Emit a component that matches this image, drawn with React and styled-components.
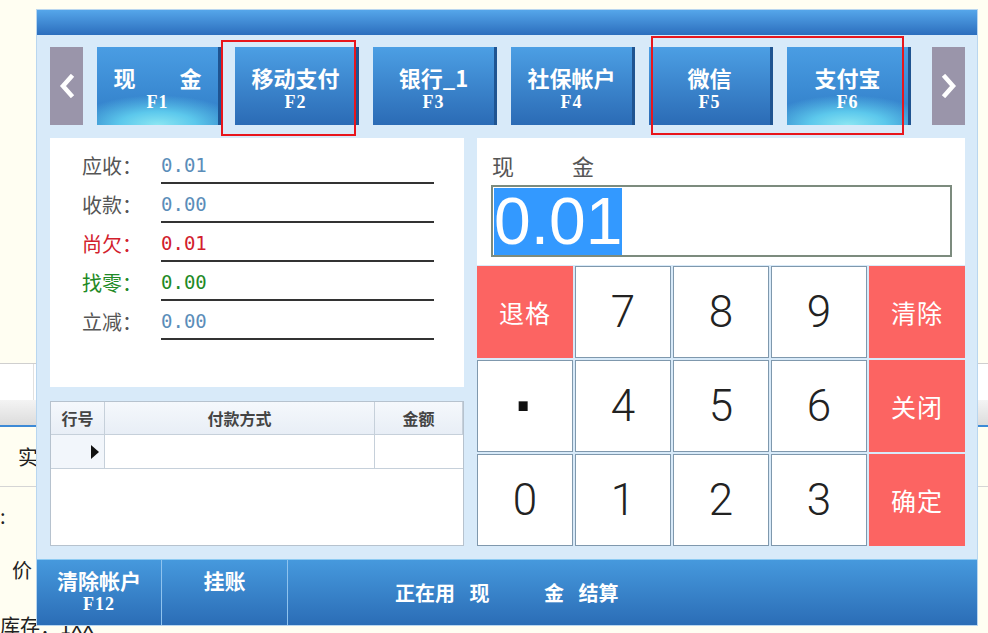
import React from "react";
import styled, { createGlobalStyle, css } from "styled-components";

const GlobalStyle = createGlobalStyle`
  html, body {
    margin: 0;
    padding: 0;
  }
  body {
    background: #fffef2;
    font-family: "Noto Sans CJK SC", "Noto Sans", sans-serif;
  }
`;

const Page = styled.div`
  position: relative;
  width: 988px;
  height: 633px;
  overflow: hidden;
  background: #fffef2;
`;

/* the cashier screen behind the dialog */
const Backdrop = styled.div`
  display: flex;
  flex-direction: column;
  padding-top: 363px;
  color: #222;
  font-size: 20px;
`;

const BgInputRow = styled.div`
  height: 36px;
  border-top: 1px solid #cfcfcf;
  background: #fff;
  display: flex;
`;

const BgCell = styled.div`
  width: 33px;
  border-right: 1px solid #e0e0e0;
`;

const BgHeader = styled.div`
  height: 25px;
  background: linear-gradient(#f4f4f4, #dcdcdc);
  border-bottom: 2px solid #3d8ad6;
`;

const BgRow = styled.div`
  height: 59px;
  border-bottom: 1px solid #d5d5d5;
  display: flex;
  align-items: center;
  padding-left: 18px;
`;

const BgFields = styled.div`
  display: flex;
  flex-direction: column;
  padding-top: 16px;
`;

const BgLine = styled.div`
  height: ${(p) => p.h}px;
  padding-left: ${(p) => p.indent || 0}px;
  line-height: ${(p) => p.h}px;
  white-space: nowrap;
`;

/* dialog */
const Dialog = styled.div`
  position: absolute;
  left: 37px;
  top: 10px;
  width: 940px;
  height: 615px;
  background: #d8eaf9;
  display: flex;
  flex-direction: column;
  box-shadow: 0 0 0 1px #b9d6ef;
`;

const TitleBar = styled.div`
  height: 25px;
  background: linear-gradient(#55a6ea, #2c6ebd);
`;

const Content = styled.div`
  flex: 1;
  padding: 12px 12px 13px 13px;
  display: flex;
  flex-direction: column;
  gap: 13px;
`;

const TabRow = styled.div`
  height: 78px;
  display: flex;
`;

const Arrow = styled.div`
  width: 33px;
  background: #9a95aa;
  display: flex;
  align-items: center;
  justify-content: center;
`;

const Tabs = styled.div`
  flex: 1;
  display: flex;
  gap: 14px;
  margin: 0 21px 0 14px;
`;

const Tab = styled.div`
  width: 124px;
  box-sizing: border-box;
  border-right: 3px solid #1f5491;
  background: linear-gradient(#4c9fe4, #2b6bb5);
  ${(p) =>
    p.active &&
    css`
      background: radial-gradient(ellipse 70% 38% at 50% 100%, #8be6f2 0%, #5cc8ec 45%, rgba(80, 170, 230, 0) 100%),
        linear-gradient(#4a9de3, #2f7cc6);
    `}
  color: #fff;
  font-weight: 700;
  display: flex;
  flex-direction: column;
  align-items: center;
  padding-top: 17px;
`;

const TabName = styled.div`
  font-size: 22px;
  line-height: 27px;
  white-space: pre;
`;

const FKey = styled.div`
  font-family: "Liberation Serif", "Noto Sans CJK SC", serif;
  font-size: 18px;
  line-height: 22px;
  letter-spacing: 1px;
`;

const Panels = styled.div`
  flex: 1;
  display: flex;
  gap: 13px;
`;

const LeftCol = styled.div`
  width: 414px;
  display: flex;
  flex-direction: column;
  gap: 14px;
`;

const InfoPanel = styled.div`
  height: 249px;
  background: #fff;
  box-sizing: border-box;
  padding: 7px 0 0 32px;
`;

const InfoRow = styled.div`
  display: grid;
  grid-template-columns: 79px 273px;
  height: 39px;
  align-items: end;
`;

const InfoLabel = styled.div`
  font-size: 20px;
  line-height: 30px;
  padding-bottom: 3px;
  color: ${(p) => p.color || "#555"};
`;

const InfoValue = styled.div`
  font-family: "DejaVu Sans Mono", "Liberation Mono", monospace;
  font-size: 19px;
  line-height: 30px;
  padding-bottom: 2px;
  border-bottom: 2px solid #333;
  color: ${(p) => p.color || "#5b8db9"};
`;

const Table = styled.div`
  flex: 1;
  background: #fff;
  border: 1px solid #b6c2ce;
  display: grid;
  grid-template-columns: 54px 270px 1fr;
  grid-template-rows: 33px 34px 1fr;
`;

const Th = styled.div`
  background: linear-gradient(#f5f8fc, #e8eef6);
  border-right: 1px solid #c6d0da;
  border-bottom: 1px solid #c6d0da;
  font-size: 16px;
  font-weight: 700;
  color: #444;
  display: flex;
  align-items: center;
  justify-content: center;
  &:last-of-type {
    border-right: none;
  }
`;

const Td = styled.div`
  border-right: 1px solid #c6d0da;
  border-bottom: 1px solid #c6d0da;
  background: ${(p) => (p.head ? "#f2f6fb" : "#fff")};
  display: flex;
  align-items: center;
  justify-content: flex-end;
  padding-right: 5px;
  &:nth-child(6) {
    border-right: none;
  }
`;

const RightCol = styled.div`
  width: 488px;
  display: flex;
  flex-direction: column;
  gap: 1px;
`;

const AmountPanel = styled.div`
  height: 127px;
  box-sizing: border-box;
  background: #fff;
  padding: 12px 13px 0 14px;
`;

const MethodLabel = styled.div`
  font-size: 22px;
  line-height: 30px;
  color: #555;
  padding-left: 1px;
  white-space: pre;
  word-spacing: 9px;
  margin-bottom: 5px;
`;

const AmountBox = styled.div`
  height: 72px;
  box-sizing: border-box;
  border: 2px solid #7c8b7e;
  padding: 1px 0 0 1px;
`;

const Selected = styled.span`
  display: inline-block;
  background: #3399ff;
  color: #fff;
  font-family: "Liberation Sans", Arial, sans-serif;
  font-size: 66px;
  line-height: 67px;
  height: 67px;
`;

const Keypad = styled.div`
  height: 280px;
  display: grid;
  grid-template-columns: repeat(5, 96px);
  grid-template-rows: repeat(3, 92px);
  gap: 2px;
`;

const Key = styled.div`
  box-sizing: border-box;
  display: flex;
  align-items: center;
  justify-content: center;
  background: #fff;
  border: 1px solid #7f98ad;
  font-family: Roboto, "Liberation Sans", sans-serif;
  font-weight: 300;
  font-size: 44px;
  color: #222;
  ${(p) =>
    p.dot &&
    css`
      font-family: "Liberation Sans", sans-serif;
      font-weight: 700;
      font-size: 64px;
      color: #111;
    `}
  ${(p) =>
    p.red &&
    css`
      background: #fc6462;
      border: none;
      color: #fff;
      font-family: "Noto Sans CJK SC", sans-serif;
      font-weight: 400;
      font-size: 25px;
      letter-spacing: 1px;
    `}
`;

const Footer = styled.div`
  height: 66px;
  box-sizing: border-box;
  border-top: 1px solid #8ccaf2;
  background: linear-gradient(#4699dd, #2b6db6);
  display: flex;
  color: #fff;
  font-weight: 700;
`;

const FooterBtn = styled.div`
  width: ${(p) => p.w}px;
  border-right: 1px solid #8fc3ee;
  display: flex;
  flex-direction: column;
  align-items: center;
  padding-top: 7px;
  font-size: 21px;
  line-height: 26px;
`;

const Status = styled.div`
  flex: 1;
  display: flex;
  align-items: center;
  padding-left: 107px;
  font-size: 20px;
  white-space: pre;
  word-spacing: 10px;
`;

/* red annotation frames drawn over the screenshot */
const Mark = styled.div`
  position: absolute;
  border: 2px solid #e8161c;
  pointer-events: none;
`;

const Chevron = ({ dir }) => (
  <svg width="16" height="24" viewBox="0 0 16 24">
    <polyline
      points={dir === "left" ? "12,3 4,12 12,21" : "4,3 12,12 4,21"}
      fill="none"
      stroke="#fff"
      strokeWidth="4.5"
      strokeLinecap="square"
    />
  </svg>
);

const tabs = [
  { name: "现　　金", key: "F1", active: true },
  { name: "移动支付", key: "F2" },
  { name: "银行_1", key: "F3" },
  { name: "社保帐户", key: "F4" },
  { name: "微信", key: "F5" },
  { name: "支付宝", key: "F6", active: true },
];

const info = [
  { label: "应收：", value: "0.01" },
  { label: "收款：", value: "0.00" },
  { label: "尚欠：", value: "0.01", color: "#d2202c" },
  { label: "找零：", value: "0.00", color: "#1f8a26" },
  { label: "立减：", value: "0.00" },
];

const keys = [
  { t: "退格", red: true },
  { t: "7" },
  { t: "8" },
  { t: "9" },
  { t: "清除", red: true },
  { t: "·", dot: true },
  { t: "4" },
  { t: "5" },
  { t: "6" },
  { t: "关闭", red: true },
  { t: "0" },
  { t: "1" },
  { t: "2" },
  { t: "3" },
  { t: "确定", red: true },
];

export default function App() {
  return (
    <Page>
      <GlobalStyle />
      <Backdrop>
        <BgInputRow>
          <BgCell />
        </BgInputRow>
        <BgHeader />
        <BgRow>实</BgRow>
        <BgFields>
          <BgLine h={26}>:</BgLine>
          <BgLine h={82} indent={12}>
            价
          </BgLine>
          <BgLine h={30}>库存：1XX</BgLine>
        </BgFields>
      </Backdrop>

      <Dialog>
        <TitleBar />
        <Content>
          <TabRow>
            <Arrow>
              <Chevron dir="left" />
            </Arrow>
            <Tabs>
              {tabs.map((t) => (
                <Tab key={t.key} active={t.active}>
                  <TabName>{t.name}</TabName>
                  <FKey>{t.key}</FKey>
                </Tab>
              ))}
            </Tabs>
            <Arrow>
              <Chevron dir="right" />
            </Arrow>
          </TabRow>

          <Panels>
            <LeftCol>
              <InfoPanel>
                {info.map((r) => (
                  <InfoRow key={r.label}>
                    <InfoLabel color={r.color}>{r.label}</InfoLabel>
                    <InfoValue color={r.color}>{r.value}</InfoValue>
                  </InfoRow>
                ))}
              </InfoPanel>
              <Table>
                <Th>行号</Th>
                <Th>付款方式</Th>
                <Th>金额</Th>
                <Td head>
                  <svg width="8" height="14" viewBox="0 0 8 14">
                    <polygon points="0,0 8,7 0,14" fill="#111" />
                  </svg>
                </Td>
                <Td />
                <Td />
              </Table>
            </LeftCol>

            <RightCol>
              <AmountPanel>
                <MethodLabel>现　　 金</MethodLabel>
                <AmountBox>
                  <Selected>0.01</Selected>
                </AmountBox>
              </AmountPanel>
              <Keypad>
                {keys.map((k) => (
                  <Key key={k.t} red={k.red} dot={k.dot}>
                    {k.t}
                  </Key>
                ))}
              </Keypad>
            </RightCol>
          </Panels>
        </Content>
        <Footer>
          <FooterBtn w={124}>
            <div>清除帐户</div>
            <FKey>F12</FKey>
          </FooterBtn>
          <FooterBtn w={125}>挂账</FooterBtn>
          <Status>正在用 现　　 金 结算</Status>
        </Footer>
      </Dialog>

      <Mark style={{ left: 221, top: 40, width: 131, height: 92 }} />
      <Mark style={{ left: 651, top: 36, width: 249, height: 95 }} />
    </Page>
  );
}
